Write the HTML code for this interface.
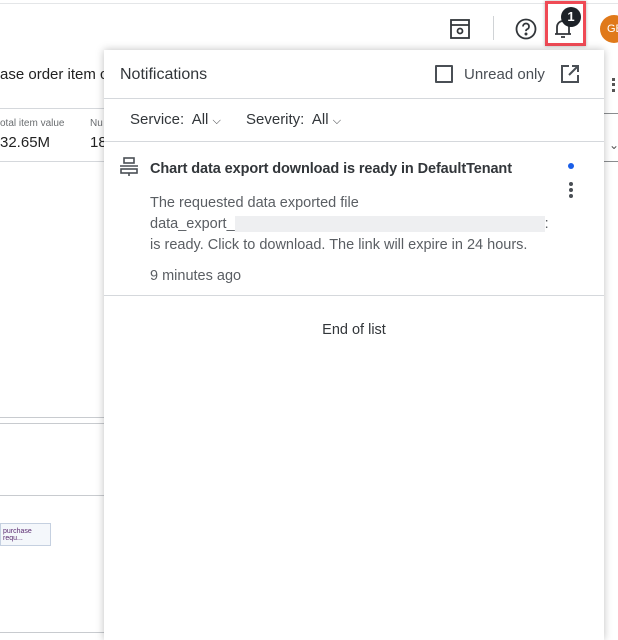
<!DOCTYPE html>
<html><head><style>
*{margin:0;padding:0;box-sizing:border-box}
body{width:618px;height:635px;overflow:hidden;background:#fff;font-family:"Liberation Sans",sans-serif;position:relative;color:#32363a}
.a{position:absolute}
.hl{position:absolute;height:1px;background:#d5d8dc}
.panel{position:absolute;left:104px;top:50px;width:500px;height:590px;background:#fff;box-shadow:0 0 8px rgba(0,0,0,.25)}
</style></head><body>
<div class="hl" style="left:0;top:3px;width:618px;background:#e4e6e8"></div>
<div class="a" style="left:0;top:66px;font-size:15px;color:#222">ase order item c</div>
<div class="hl" style="left:0;top:108px;width:110px"></div>
<div class="a" style="left:0;top:118px;font-size:10px;color:#6a6d70">otal item value</div>
<div class="a" style="left:90px;top:118px;font-size:10px;color:#6a6d70">Nu</div>
<div class="a" style="left:0;top:134px;font-size:15px;color:#222">32.65M</div>
<div class="a" style="left:90px;top:134px;font-size:15px;color:#222">18</div>
<div class="hl" style="left:0;top:161px;width:110px"></div>
<div class="hl" style="left:0;top:417px;width:110px;background:#c8cbcf"></div>
<div class="hl" style="left:0;top:423px;width:110px;background:#c8cbcf"></div>
<div class="hl" style="left:0;top:495px;width:110px;background:#c8cbcf"></div>
<div class="a" style="left:0;top:523px;width:51px;height:23px;border:1px solid #c5d0e0;background:#f4f7fb;font-size:7px;padding:4px 0 0 2px;color:#5a2a70">purchase requ...</div>
<div class="hl" style="left:0;top:632px;width:110px;background:#c8cbcf"></div>
<div class="hl" style="left:604px;top:113px;width:14px;background:#8a8d90"></div>
<div class="hl" style="left:604px;top:161px;width:14px;background:#8a8d90"></div>
<div class="a" style="left:612px;top:78px;width:3px;height:14px;border-left:3px dotted #555"></div>
<div class="a" style="left:609px;top:138px;font-size:12px;color:#555">⌄</div>
<svg class="a" style="left:449px;top:18px" width="22" height="22" viewBox="0 0 22 22" fill="none" stroke="#32363a" stroke-width="1.8"><rect x="2" y="2" width="18" height="18"/><line x1="2" y1="7" x2="20" y2="7"/><circle cx="11" cy="13" r="2.5"/></svg>
<div class="a" style="left:493px;top:16px;width:1px;height:24px;background:#d0d3d6"></div>
<svg class="a" style="left:515px;top:18px" width="22" height="22" viewBox="0 0 22 22" fill="none" stroke="#32363a" stroke-width="1.8"><circle cx="11" cy="11" r="9.5"/><path d="M8 8.5a3 3 0 1 1 4 2.8c-.8.4-1 1-1 1.8"/><circle cx="11" cy="16" r=".6" fill="#32363a"/></svg>
<div class="a" style="left:545px;top:1px;width:41px;height:45px;border:3px solid #ef4a55;box-shadow:0 0 3px rgba(0,0,0,.3)"></div>
<svg class="a" style="left:553px;top:18px" width="20" height="22" viewBox="0 0 20 22" fill="none" stroke="#32363a" stroke-width="1.8"><path d="M4 16V9a6 6 0 0 1 12 0v7M2 16h16M8 19h4"/></svg>
<div class="a" style="left:561px;top:7px;width:20px;height:20px;border-radius:50%;background:#1d2228;color:#fff;font-weight:bold;font-size:13px;text-align:center;line-height:20px">1</div>
<div class="a" style="left:600px;top:15px;width:28px;height:28px;border-radius:50%;background:#e0791a;color:#fff;font-size:11px;line-height:28px;padding-left:7px">GB</div>
<div class="panel">
<div class="a" style="left:16px;top:16px;font-size:16px;color:#32363a">Notifications</div>
<div class="a" style="left:331px;top:15px;width:18px;height:18px;border:2px solid #4a4f55;border-radius:1px"></div>
<div class="a" style="left:360px;top:16px;font-size:15px;color:#4a4f55">Unread only</div>
<svg class="a" style="left:456px;top:14px" width="20" height="20" viewBox="0 0 20 20" fill="none" stroke="#4a4f55" stroke-width="2"><path d="M9 2H2v16h16v-7M12 2h6v6M18 2l-9 9"/></svg>
<div class="hl" style="left:0;top:48px;width:500px"></div>
<div class="a" style="left:26px;top:61px;font-size:15px;color:#32363a">Service:&nbsp; All <span style="font-size:11px">⌵</span></div>
<div class="a" style="left:142px;top:61px;font-size:15px;color:#32363a">Severity:&nbsp; All <span style="font-size:11px">⌵</span></div>
<div class="hl" style="left:0;top:91px;width:500px"></div>
<svg class="a" style="left:15px;top:107px" width="20" height="20" viewBox="0 0 20 20" fill="none" stroke="#4a4f55" stroke-width="1.6"><rect x="5" y="1" width="10" height="5"/><line x1="1" y1="9" x2="19" y2="9"/><rect x="2" y="12" width="16" height="4"/><line x1="10" y1="16" x2="10" y2="19"/></svg>
<div class="a" style="left:46px;top:111px;font-size:14.5px;font-weight:bold;color:#32363a;letter-spacing:-.1px">Chart data export download is ready in DefaultTenant</div>
<div class="a" style="left:464px;top:113px;width:6px;height:6px;border-radius:50%;background:#1a5ee8"></div>
<div class="a" style="left:465px;top:132px;width:4px;height:4px;border-radius:50%;background:#4a4f55;box-shadow:0 6px 0 #4a4f55,0 12px 0 #4a4f55"></div>
<div class="a" style="left:46px;top:143px;font-size:14.5px;line-height:21px;color:#5a5e63">The requested data exported file<br>data_export_<span style="display:inline-block;width:310px;height:16px;background:#eeeff1;vertical-align:middle"></span>:<br>is ready. Click to download. The link will expire in 24 hours.</div>
<div class="a" style="left:46px;top:218px;font-size:14.5px;color:#5a5e63">9 minutes ago</div>
<div class="hl" style="left:0;top:245px;width:500px"></div>
<div class="a" style="left:0;top:272px;width:500px;text-align:center;font-size:14.5px;color:#32363a">End of list</div>
</div>
</body></html>
